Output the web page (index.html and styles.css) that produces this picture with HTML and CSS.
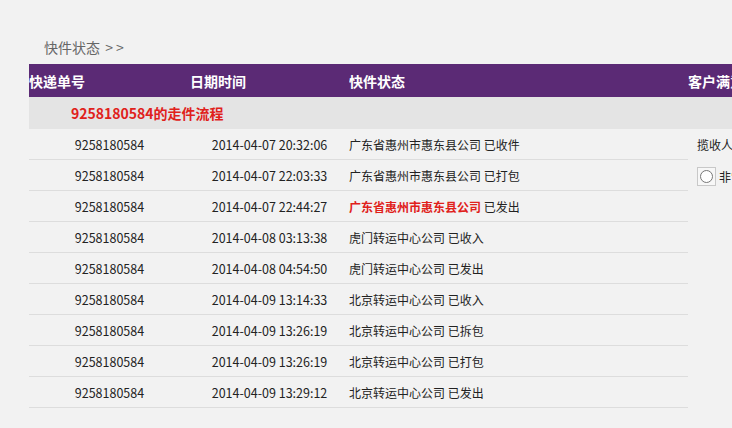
FILE: index.html
```html
<!DOCTYPE html>
<html lang="zh-CN">
<head>
<meta charset="utf-8">
<title>快件状态</title>
<link rel="stylesheet" href="styles.css">
</head>
<body>
<div class="crumb">快件状态 <span class="arrows">&gt;&gt;</span></div>
<table class="track">
  <colgroup>
    <col class="c1"><col class="c2"><col class="c3"><col class="c4">
  </colgroup>
  <thead>
    <tr class="head">
      <th>快递单号</th><th>日期时间</th><th>快件状态</th><th>客户满意度</th>
    </tr>
  </thead>
  <tbody>
    <tr class="title"><td colspan="4">9258180584的走件流程</td></tr>
    <tr>
      <td class="num">9258180584</td><td class="date">2014-04-07 20:32:06</td><td class="st">广东省惠州市惠东县公司 已收件</td>
      <td class="side" rowspan="9">
        <div class="side-q">揽收人员服务态度</div>
        <label class="opt"><span class="box"><span class="radio"></span></span>非常满意</label>
      </td>
    </tr>
    <tr><td class="num">9258180584</td><td class="date">2014-04-07 22:03:33</td><td class="st">广东省惠州市惠东县公司 已打包</td></tr>
    <tr><td class="num">9258180584</td><td class="date">2014-04-07 22:44:27</td><td class="st"><b class="red">广东省惠州市惠东县公司</b> 已发出</td></tr>
    <tr><td class="num">9258180584</td><td class="date">2014-04-08 03:13:38</td><td class="st">虎门转运中心公司 已收入</td></tr>
    <tr><td class="num">9258180584</td><td class="date">2014-04-08 04:54:50</td><td class="st">虎门转运中心公司 已发出</td></tr>
    <tr><td class="num">9258180584</td><td class="date">2014-04-09 13:14:33</td><td class="st">北京转运中心公司 已收入</td></tr>
    <tr><td class="num">9258180584</td><td class="date">2014-04-09 13:26:19</td><td class="st">北京转运中心公司 已拆包</td></tr>
    <tr><td class="num">9258180584</td><td class="date">2014-04-09 13:26:19</td><td class="st">北京转运中心公司 已打包</td></tr>
    <tr><td class="num">9258180584</td><td class="date">2014-04-09 13:29:12</td><td class="st">北京转运中心公司 已发出</td></tr>
  </tbody>
</table>
</body>
</html>
```
FILE: styles.css
```css
html, body {
  margin: 0;
  padding: 0;
  overflow: hidden;
  background: #f2f2f2;
}
body {
  font-family: "Noto Sans CJK SC", "Microsoft YaHei", sans-serif;
  color: #222;
  width: 732px;
  height: 428px;
}
.crumb {
  padding: 37px 0 0 44px;
  height: 27px;
  font-size: 14px;
  line-height: 20px;
  color: #666;
}
.arrows {
  letter-spacing: 3px;
  margin-left: 2px;
}
.track {
  margin-left: 29px;
  border-collapse: collapse;
  table-layout: fixed;
  width: 840px;
}
.c1 { width: 161px; }
.c2 { width: 159px; }
.c3 { width: 339px; }
.c4 { width: 181px; }
.head th {
  background: #5b2a75;
  color: #fff;
  font-size: 14px;
  font-weight: bold;
  text-align: left;
  padding: 0;
  height: 33px;
  white-space: nowrap;
  overflow: hidden;
}
.title td {
  background: #e4e4e4;
  color: #e0211b;
  font-weight: bold;
  font-size: 14px;
  height: 31px;
  padding: 0 0 0 42px;
  border-bottom-color: #e4e4e4;
}
tbody td {
  font-size: 12px;
  height: 30px;
  padding: 0;
  border-bottom: 1px solid #dddddd;
  white-space: nowrap;
}
.num, .date {
  text-align: center;
  font-size: 12.5px;
}
.red { color: #e0211b; }
td.side {
  border-bottom: none;
  vertical-align: top;
  padding-left: 9px;
}
.side-q {
  line-height: 31px;
  height: 31px;
}
.opt {
  display: flex;
  align-items: center;
  margin-top: 7px;
}
.box {
  width: 17px;
  height: 17px;
  border: 1px solid #c8c8c8;
  background: #f7f7f7;
  display: flex;
  align-items: center;
  justify-content: center;
  margin-right: 3px;
}
.radio {
  width: 11px;
  height: 11px;
  border: 1px solid #777;
  border-radius: 50%;
  background: #fff;
}
```
